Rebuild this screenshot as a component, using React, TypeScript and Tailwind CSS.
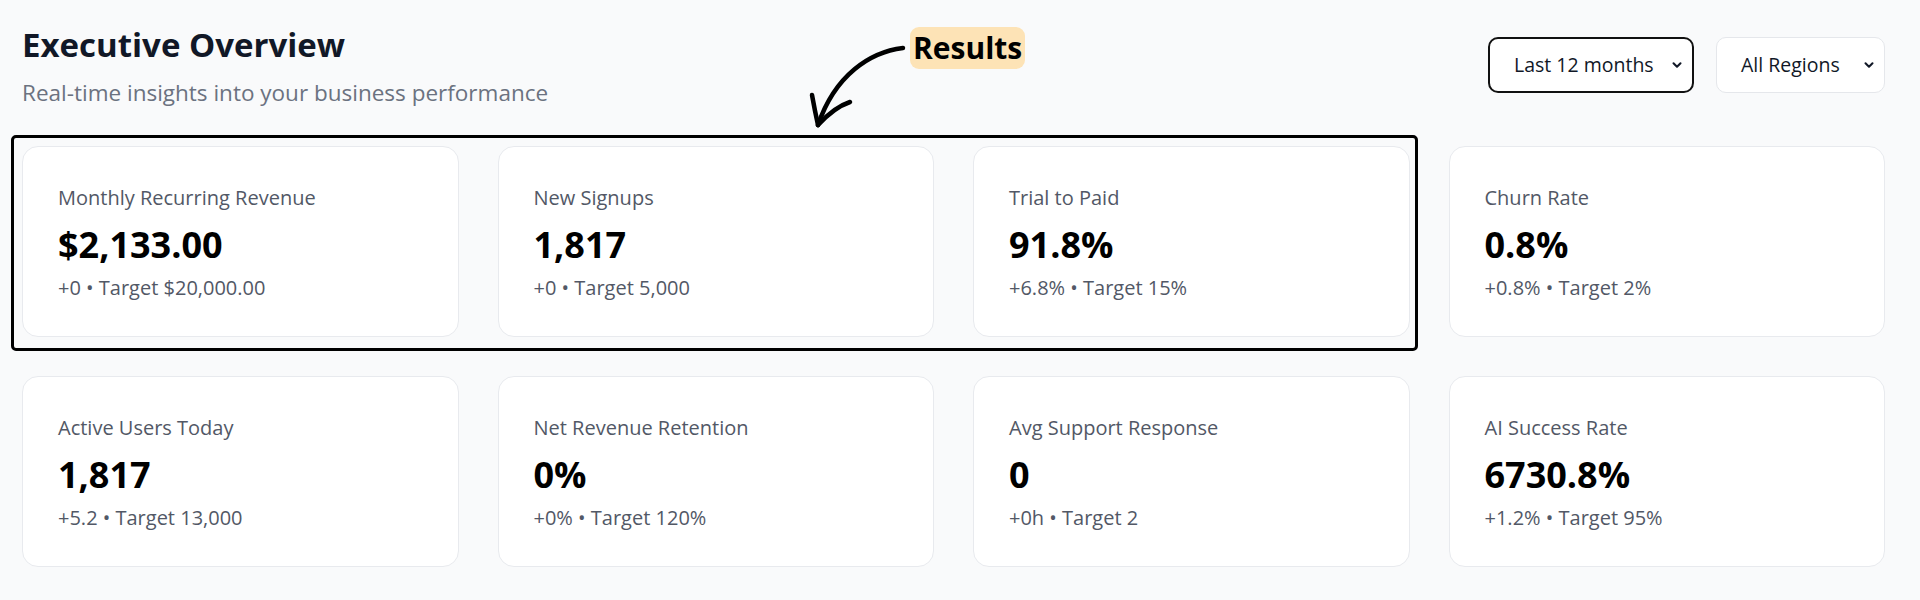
import { ChevronDown } from 'lucide-react';

type Metric = {
  label: string;
  value: string;
  delta: string;
  target: string;
};

const metrics: Metric[] = [
  { label: 'Monthly Recurring Revenue', value: '$2,133.00', delta: '+0', target: '$20,000.00' },
  { label: 'New Signups', value: '1,817', delta: '+0', target: '5,000' },
  { label: 'Trial to Paid', value: '91.8%', delta: '+6.8%', target: '15%' },
  { label: 'Churn Rate', value: '0.8%', delta: '+0.8%', target: '2%' },
  { label: 'Active Users Today', value: '1,817', delta: '+5.2', target: '13,000' },
  { label: 'Net Revenue Retention', value: '0%', delta: '+0%', target: '120%' },
  { label: 'Avg Support Response', value: '0', delta: '+0h', target: '2' },
  { label: 'AI Success Rate', value: '6730.8%', delta: '+1.2%', target: '95%' },
];

function MetricCard({ metric }: { metric: Metric }) {
  return (
    <div className="bg-white border border-[#e8eaee] rounded-2xl pl-[35px] pr-6 pt-[37px] pb-[34px]">
      <p className="text-[20px] leading-[28px] text-[#525866]">{metric.label}</p>
      <p className="mt-[13px] text-[36px] leading-[40px] font-bold text-black">{metric.value}</p>
      <p className="mt-[9px] text-[20px] leading-[28px] text-[#525866]">
        {metric.delta} • Target {metric.target}
      </p>
    </div>
  );
}

function FakeSelect({
  label,
  focused,
  width,
}: {
  label: string;
  focused?: boolean;
  width: string;
}) {
  return (
    <div
      className={`${width} h-[56px] flex items-center justify-between bg-white rounded-[10px] pl-[24px] pr-[8px] text-[19.5px] text-[#111827] ${
        focused ? 'border-2 border-[#111]' : 'border border-[#e5e7eb]'
      }`}
    >
      <span>{label}</span>
      <ChevronDown className="w-[14px] h-[14px]" strokeWidth={3.5} />
    </div>
  );
}

export default function App() {
  return (
    <div
      className="relative min-h-screen bg-[#f9fafb] pl-[22px] pr-[35px] pt-[25px]"
      style={{ fontFamily: '"Open Sans", "Noto Sans", sans-serif' }}
    >
      <div className="flex items-start justify-between">
        <div>
          <h1 className="text-[33px] leading-[40px] font-bold text-[#111827]">Executive Overview</h1>
          <p className="mt-[13px] text-[22.5px] leading-[30px] text-[#6b7280]">
            Real-time insights into your business performance
          </p>
        </div>
        <div className="flex gap-[22px] mt-[12px]">
          <FakeSelect label="Last 12 months" focused width="w-[206px]" />
          <FakeSelect label="All Regions" width="w-[169px]" />
        </div>
      </div>

      <div className="mt-[38px] grid grid-cols-4 gap-[39px]">
        {metrics.map((m) => (
          <MetricCard key={m.label} metric={m} />
        ))}
      </div>

      {/* annotation overlay */}
      <div className="absolute left-[11px] top-[135px] w-[1407px] h-[216px] border-[3px] border-black rounded-[5px] pointer-events-none" />
      <div className="absolute left-[910px] top-[27px] h-[42px] px-[3px] flex items-center rounded-[9px] bg-[#fde3b6] text-[30px] font-bold text-black leading-none">
        Results
      </div>
      <svg
        className="absolute left-[800px] top-[40px] pointer-events-none"
        width="110"
        height="92"
        viewBox="0 0 110 92"
        fill="none"
        stroke="black"
        strokeLinecap="round"
        strokeLinejoin="round"
      >
        <path d="M103 8 C70 12 35 35 18 85" strokeWidth="4.5" />
        <path d="M12 55 C14 66 16 76 18 85" strokeWidth="4.5" />
        <path d="M18 85 C28 74 38 66 50 62" strokeWidth="4.5" />
      </svg>
    </div>
  );
}
